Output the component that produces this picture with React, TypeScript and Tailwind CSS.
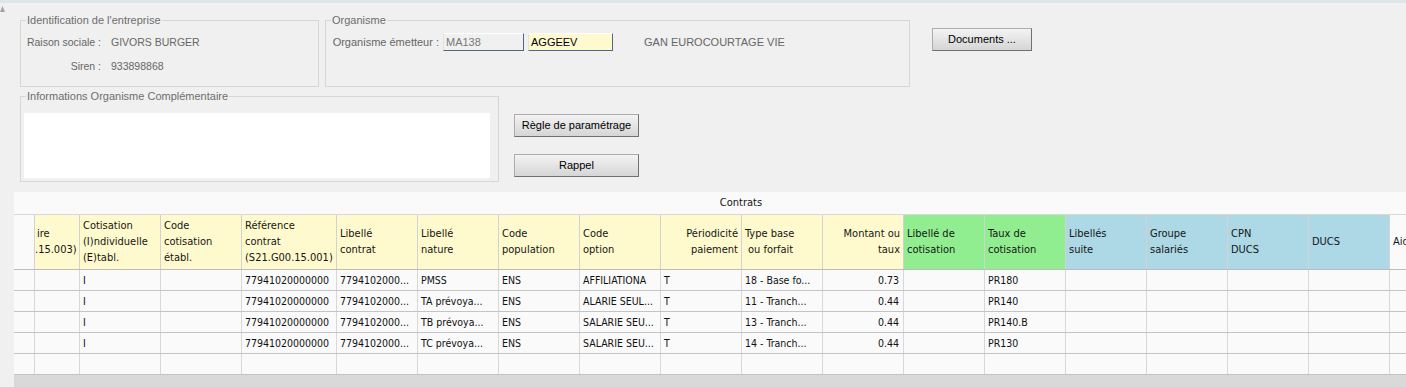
import type { ReactNode } from "react";

// ── Column definitions ────────────────────────────────────────────────────────
const YELLOW = "bg-[#fffacd]";
const GREEN  = "bg-[#90ee90]";
const BLUE   = "bg-[#add8e6]";
const PLAIN  = "bg-[#fafafa]";

interface Col {
  w: string;
  bg: string;
  head: ReactNode[];
  pad?: string;
  headRight?: boolean;
  dataRight?: boolean;
}

const COLS: Col[] = [
  { w: "w-[21px]", bg: PLAIN,  head: [] },
  { w: "w-[45px]", bg: YELLOW, head: [<span key="a" className="pl-[2px]">ire</span>, ".15.003)"], pad: "px-0" },
  { w: "w-[81px]", bg: YELLOW, head: ["Cotisation", "(I)ndividuelle", "(E)tabl."] },
  { w: "w-[81px]", bg: YELLOW, head: ["Code", "cotisation", "établ."] },
  { w: "w-[95px]", bg: YELLOW, head: ["Référence", "contrat", "(S21.G00.15.001)"] },
  { w: "w-[81px]", bg: YELLOW, head: ["Libellé", "contrat"] },
  { w: "w-[81px]", bg: YELLOW, head: ["Libellé", "nature"] },
  { w: "w-[81px]", bg: YELLOW, head: ["Code", "population"] },
  { w: "w-[81px]", bg: YELLOW, head: ["Code", "option"] },
  { w: "w-[81px]", bg: YELLOW, head: ["Périodicité", "paiement"], headRight: true },
  { w: "w-[81px]", bg: YELLOW, head: ["Type base", <span key="b" className="pl-[3px]">ou forfait</span>] },
  { w: "w-[81px]", bg: YELLOW, head: ["Montant ou", "taux"], headRight: true, dataRight: true },
  { w: "w-[81px]", bg: GREEN,  head: ["Libellé de", "cotisation"] },
  { w: "w-[81px]", bg: GREEN,  head: ["Taux de", "cotisation"] },
  { w: "w-[81px]", bg: BLUE,   head: ["Libellés", "suite"] },
  { w: "w-[81px]", bg: BLUE,   head: ["Groupe", "salariés"] },
  { w: "w-[81px]", bg: BLUE,   head: ["CPN", "DUCS"] },
  { w: "w-[81px]", bg: BLUE,   head: ["DUCS"] },
  { w: "w-[81px]", bg: PLAIN,  head: ["Aide"] },
];

const ROWS: string[][] = [
  ["", "", "I", "", "77941020000000", "7794102000...", "PMSS",         "ENS", "AFFILIATIONA",  "T", "18 - Base fo...", "0.73", "", "PR180",   "", "", "", "", ""],
  ["", "", "I", "", "77941020000000", "7794102000...", "TA prévoya...", "ENS", "ALARIE SEUL...", "T", "11 - Tranch...",  "0.44", "", "PR140",   "", "", "", "", ""],
  ["", "", "I", "", "77941020000000", "7794102000...", "TB prévoya...", "ENS", "SALARIE SEU...", "T", "13 - Tranch...",  "0.44", "", "PR140.B", "", "", "", "", ""],
  ["", "", "I", "", "77941020000000", "7794102000...", "TC prévoya...", "ENS", "SALARIE SEU...", "T", "14 - Tranch...",  "0.44", "", "PR130",   "", "", "", "", ""],
  ["", "", "", "", "", "", "", "", "", "", "", "", "", "", "", "", "", "", ""],
];

// ── Small pieces ──────────────────────────────────────────────────────────────
function Button({ className, children }: { className: string; children: ReactNode }) {
  return (
    <div
      className={`flex items-center justify-center border border-[#acacac] border-r-[#707070] border-b-[#707070] bg-linear-to-b from-[#f4f4f4] to-[#d5d5d5] text-[11px] text-black ${className}`}
    >
      {children}
    </div>
  );
}

function Legend({ children }: { children: ReactNode }) {
  return <legend className="ml-[5px] px-[1px] text-[11px] leading-[14px] text-[#6d6d6d]">{children}</legend>;
}

// ── Component ─────────────────────────────────────────────────────────────────
export default function App() {
  return (
    <div className="relative flex h-[387px] w-full flex-col overflow-hidden bg-[#f0f0f0] font-['Liberation_Sans',sans-serif] text-[11px] text-[#666]">
      <div className="h-[3px] shrink-0 bg-[#dfe6ea]" />
      <svg className="absolute left-0 top-[6px]" width="5" height="6" viewBox="0 0 5 6">
        <polygon points="0,6 5,6 2.5,0" fill="#a3a3a3" />
      </svg>

      {/* ── Entreprise / Organisme ── */}
      <div className="mt-[10px] flex shrink-0 pl-[20px]">
        <fieldset className="h-[74px] w-[299px] border border-[#d6d6d6]">
          <Legend>Identification de l'entreprise</Legend>
          <div className="mt-[6px] flex h-[20px] items-center text-[10.5px]">
            <span className="w-[80px] text-right">Raison sociale :</span>
            <span className="ml-[10px]">GIVORS BURGER</span>
          </div>
          <div className="mt-[4px] flex h-[20px] items-center text-[10.5px]">
            <span className="w-[80px] text-right">Siren :</span>
            <span className="ml-[10px]">933898868</span>
          </div>
        </fieldset>

        <fieldset className="ml-[6px] h-[74px] w-[585px] border border-[#d6d6d6]">
          <Legend>Organisme</Legend>
          <div className="mt-[5px] flex h-[20px] items-center">
            <span className="w-[117px] pr-[4px] text-right">Organisme émetteur :</span>
            <div className="flex h-[18px] w-[81px] items-center border border-[#e2e2e2] border-t-white border-r-[#51697f] border-b-[#51697f] bg-[#f0f0f0] pl-[2px] text-[#777]">
              MA138
            </div>
            <div className="ml-[4px] flex h-[18px] w-[85px] items-center border border-[#e2e2e2] border-t-white border-r-[#51697f] border-b-[#51697f] bg-[#fff9d0] pl-[2px] text-black">
              AGGEEV
            </div>
            <span className="ml-[31px]">GAN EUROCOURTAGE VIE</span>
          </div>
        </fieldset>

        <Button className="ml-[22px] mt-[15px] h-[23px] w-[100px]">Documents ...</Button>
      </div>

      {/* ── Informations complémentaires ── */}
      <div className="mt-[2px] flex shrink-0 pl-[20px]">
        <fieldset className="h-[93px] w-[479px] border border-[#d6d6d6]">
          <Legend>Informations Organisme Complémentaire</Legend>
          <div className="ml-[3px] mt-[10px] h-[65px] w-[466px] bg-white" />
        </fieldset>
        <div className="ml-[15px] mt-[25px] flex flex-col">
          <Button className="h-[23px] w-[125px]">Règle de paramétrage</Button>
          <Button className="mt-[17px] h-[23px] w-[125px]">Rappel</Button>
        </div>
      </div>

      {/* ── Contrats ── */}
      <div className="ml-[14px] mt-[10px] flex min-h-0 flex-1 flex-col overflow-hidden bg-[#fafafa] font-['DejaVu_Sans_Condensed','Liberation_Sans',sans-serif] text-[#151515]">
        <div className="h-[23px] shrink-0 border-b border-[#d8d8d8] pl-[62px] text-center text-[11px] leading-[22px]">
          Contrats
        </div>

        <div className="flex h-[55px] shrink-0 border-b border-[#bcbcbc] text-[11px] leading-[16px]">
          {COLS.map((c, i) => (
            <div
              key={i}
              className={`flex h-full shrink-0 flex-col justify-center overflow-hidden whitespace-nowrap border-r border-[#d2d2d2] ${c.w} ${c.bg} ${c.pad ?? "px-[3px]"} ${c.headRight ? "items-end" : "items-start"}`}
            >
              {c.head.map((line, j) => (
                <div key={j}>{line}</div>
              ))}
            </div>
          ))}
        </div>

        {ROWS.map((row, r) => (
          <div key={r} className="flex h-[21px] shrink-0 border-b border-[#c4c4c4] text-[10.5px] leading-[20px] text-[#111]">
            {row.map((v, i) => (
              <div
                key={i}
                className={`h-full shrink-0 overflow-hidden whitespace-nowrap border-r border-[#d8d8d8] px-[3px] ${COLS[i].w} ${COLS[i].dataRight ? "pr-[4px] text-right" : "text-left"}`}
              >
                {v}
              </div>
            ))}
          </div>
        ))}

        <div className="flex-1 bg-[#d9d9d9]" />
      </div>
    </div>
  );
}
